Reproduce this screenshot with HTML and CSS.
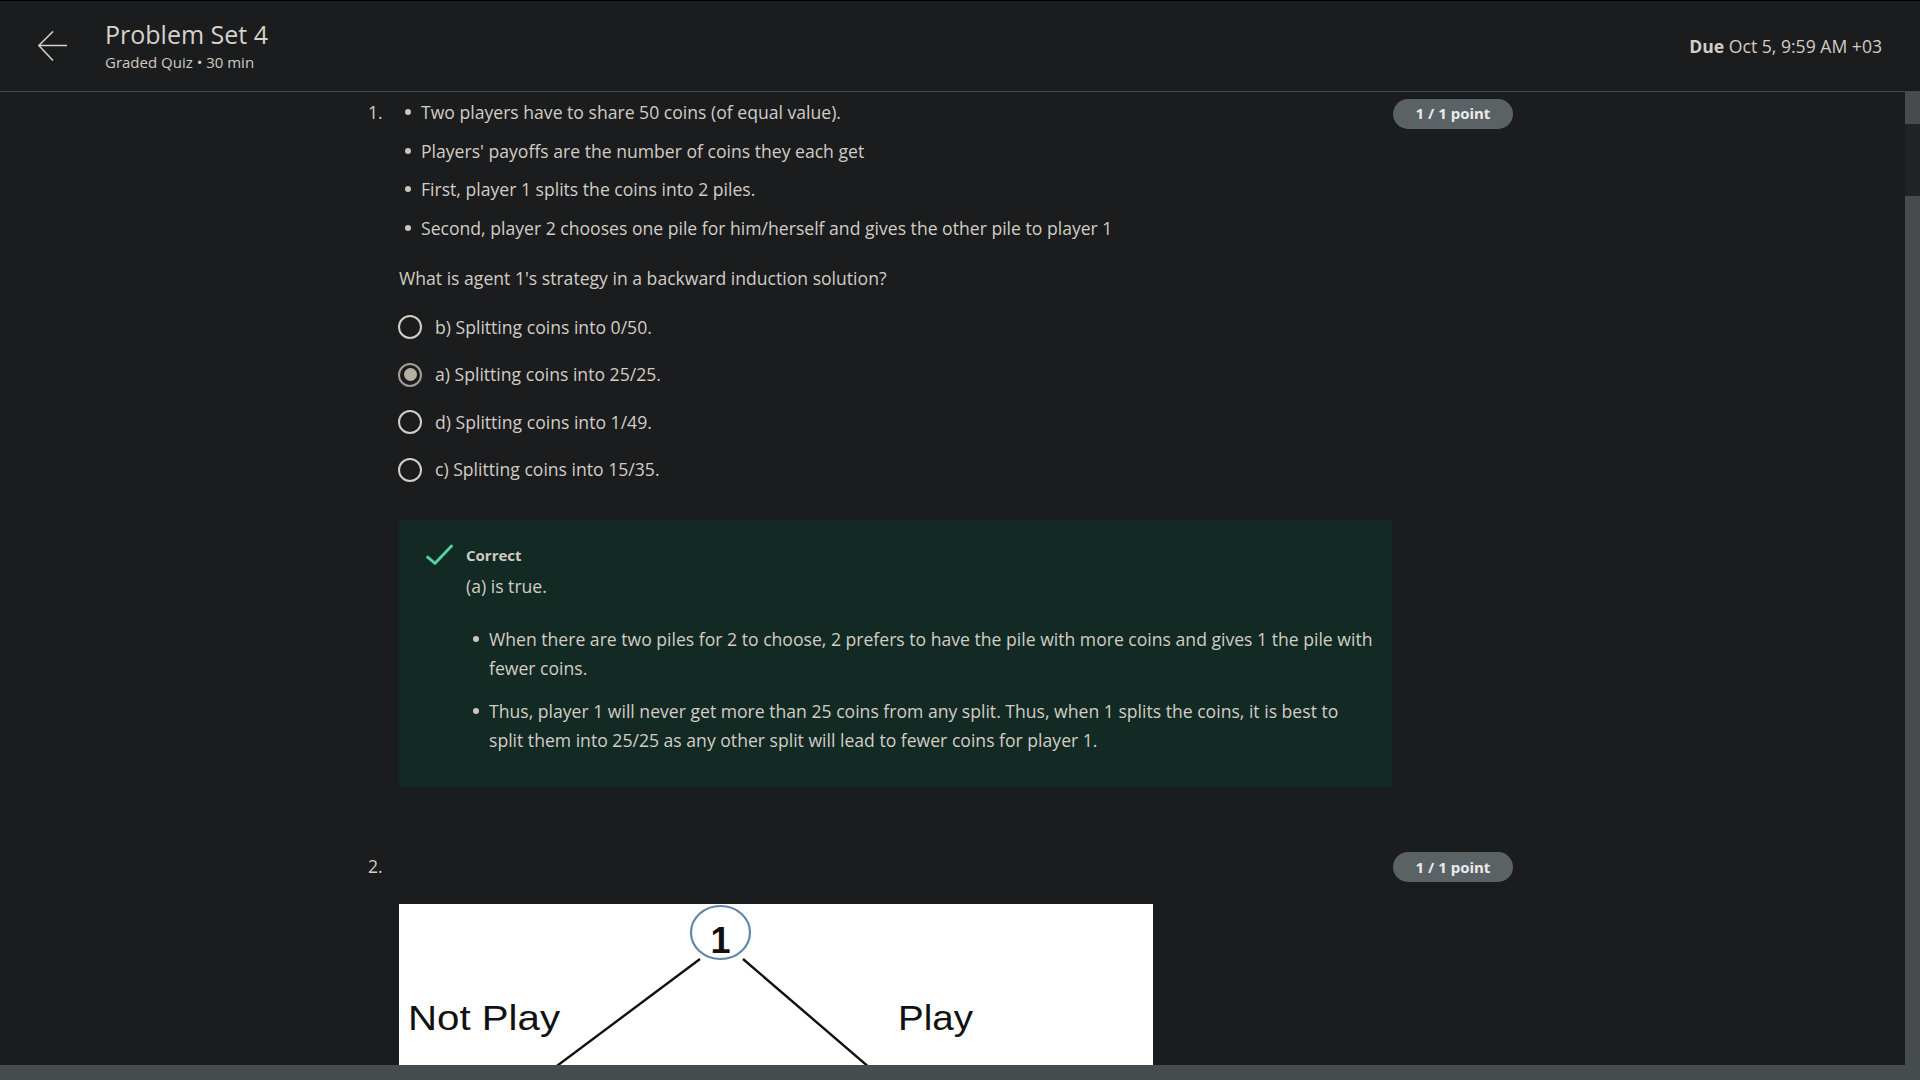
FILE: index.html
```html
<!DOCTYPE html>
<html lang="en">
<head>
<meta charset="utf-8">
<title>Problem Set 4</title>
<link rel="stylesheet" href="styles.css">
</head>
<body>
<div class="app">
  <header class="topbar">
    <div class="topbar-left">
      <svg class="back" width="30" height="31" viewBox="0 0 30 31" aria-hidden="true">
        <path d="M29 14.5 H1 M15 0.5 L0.8 14.5 L15 29.5" fill="none" stroke="#d4d0c8" stroke-width="1.6"/>
      </svg>
      <div class="titles">
        <div class="title">Problem Set 4</div>
        <div class="subtitle">Graded Quiz • 30 min</div>
      </div>
    </div>
    <div class="due"><b>Due</b> Oct 5, 9:59 AM +03</div>
  </header>
  <div class="viewport">
    <main class="content">
      <div class="quiz">
        <section class="question q1">
          <div class="qnum">1.</div>
          <div class="qbody">
            <ul class="facts">
              <li>Two players have to share 50 coins (of equal value).</li>
              <li>Players' payoffs are the number of coins they each get</li>
              <li>First, player 1 splits the coins into 2 piles.</li>
              <li>Second, player 2 chooses one pile for him/herself and gives the other pile to player 1</li>
            </ul>
            <p class="prompt">What is agent 1's strategy in a backward induction solution?</p>
            <div class="options">
              <label class="option"><span class="radio"></span><span>b) Splitting coins into 0/50.</span></label>
              <label class="option"><span class="radio checked"></span><span>a) Splitting coins into 25/25.</span></label>
              <label class="option"><span class="radio"></span><span>d) Splitting coins into 1/49.</span></label>
              <label class="option"><span class="radio"></span><span>c) Splitting coins into 15/35.</span></label>
            </div>
            <div class="feedback">
              <svg class="check" width="28" height="22" viewBox="0 0 28 22" aria-hidden="true">
                <path d="M1.7 12.4 L10 19.3 L27.3 1.2" fill="none" stroke="#55d3a0" stroke-width="2.8"/>
              </svg>
              <div class="fb-text">
                <div class="fb-title">Correct</div>
                <p class="fb-lead">(a) is true.</p>
                <ul class="fb-list">
                  <li>When there are two piles for 2 to choose, 2 prefers to have the pile with more coins and gives 1 the pile with fewer coins.</li>
                  <li>Thus, player 1 will never get more than 25 coins from any split. Thus, when 1 splits the coins, it is best to split them into 25/25 as any other split will lead to fewer coins for player 1.</li>
                </ul>
              </div>
            </div>
          </div>
          <div class="qscore"><span class="badge">1 / 1 point</span></div>
        </section>
        <section class="question q2">
          <div class="qnum">2.</div>
          <div class="qbody">
            <p class="empty"></p>
            <svg class="tree" width="754" height="300" viewBox="0 0 754 300" aria-label="Game tree">
              <rect x="0" y="0" width="754" height="300" fill="#ffffff"/>
              <line x1="301" y1="55" x2="24" y2="262" stroke="#111" stroke-width="2.4"/>
              <line x1="344" y1="55" x2="585" y2="262" stroke="#111" stroke-width="2.4"/>
              <ellipse cx="321.5" cy="28.5" rx="29.5" ry="26.5" fill="#ffffff" stroke="#6385a8" stroke-width="2.2"/>
              <text x="321.5" y="49" text-anchor="middle" class="node-label">1</text>
              <text x="9" y="126" class="edge-label" textLength="152" lengthAdjust="spacingAndGlyphs">Not Play</text>
              <text x="499" y="126" class="edge-label" textLength="75" lengthAdjust="spacingAndGlyphs">Play</text>
            </svg>
          </div>
          <div class="qscore"><span class="badge">1 / 1 point</span></div>
        </section>
      </div>
    </main>
    <div class="vscroll"><div class="vthumb"></div></div>
  </div>
  <div class="hscroll"></div>
</div>
</body>
</html>
```
FILE: styles.css
```css
* { box-sizing: border-box; }
html, body {
  margin: 0;
  padding: 0;
  height: 100%;
  overflow: hidden;
  background: #1b1c1e;
}
body {
  font-family: "Open Sans", "Noto Sans", sans-serif;
  color: #d2cdc5;
}
.app {
  display: flex;
  flex-direction: column;
  height: 100vh;
}
.topbar {
  height: 92px;
  flex: none;
  display: flex;
  align-items: center;
  justify-content: space-between;
  border-top: 1px solid #000;
  border-bottom: 1px solid #44474a;
  padding: 0 38px 0 38px;
  background: #1b1c1e;
}
.topbar-left {
  display: flex;
  align-items: center;
  gap: 37px;
}
.back { display: block; margin-top: 1px; }
.titles {
  display: flex;
  flex-direction: column;
  gap: 2px;
  margin-bottom: 3px;
}
.title {
  font-size: 25px;
  line-height: 32px;
  color: #d6d2ca;
}
.subtitle {
  font-size: 15px;
  line-height: 20px;
  color: #cfcac2;
}
.due {
  font-size: 17.6px;
  line-height: 28px;
  color: #d2cdc5;
}
.due b { font-weight: 700; }
.viewport {
  flex: 1;
  display: flex;
  min-height: 0;
}
.content {
  flex: 1;
  overflow: hidden;
}
.vscroll {
  width: 15px;
  flex: none;
  background: #464b4e;
  padding-top: 32px;
}
.vthumb {
  height: 72px;
  background: #1f2324;
}
.hscroll {
  height: 15px;
  flex: none;
  background: #464b4e;
}
.quiz {
  margin-left: 367px;
  width: 1146px;
  padding-top: 6px;
}
.question {
  display: grid;
  grid-template-columns: 32px 994px 120px;
  align-items: start;
  font-size: 17.6px;
  line-height: 29px;
}
.q1 { margin-bottom: 65px; }
.qnum { padding-left: 1px; }
.qscore {
  display: flex;
  padding-top: 0.5px;
}
.badge {
  display: inline-flex;
  align-items: center;
  justify-content: center;
  width: 120px;
  height: 30px;
  border-radius: 15px;
  background: #5a6265;
  color: #ebebeb;
  font-size: 15px;
  font-weight: 700;
  line-height: 1;
}
.facts, .fb-list { list-style: none; }
.facts li::before, .fb-list li::before {
  content: "";
  display: inline-block;
  width: 6px;
  height: 6px;
  border-radius: 50%;
  background: #cbc6be;
  margin-left: -16px;
  margin-right: 10px;
  vertical-align: 4px;
}
.facts {
  margin: 0 0 21px;
  padding-left: 22px;
}
.facts li { margin-bottom: 9.5px; }
.prompt { margin: 0 0 20px; }
.options {
  display: flex;
  flex-direction: column;
  gap: 18.5px;
  margin-bottom: 36px;
}
.option {
  display: flex;
  align-items: center;
  gap: 13px;
  height: 29px;
}
.radio {
  width: 24px;
  height: 24px;
  flex: none;
  border-radius: 50%;
  border: 2px solid #d3cfc7;
  display: flex;
  align-items: center;
  justify-content: center;
  margin-left: -1px;
}
.radio.checked { border-color: #a29e96; }
.radio.checked::after {
  content: "";
  width: 13px;
  height: 13px;
  border-radius: 50%;
  background: #b6afa3;
}
.feedback {
  display: flex;
  align-items: flex-start;
  gap: 13px;
  background: #132a24;
  padding: 24px 17px 32px 26px;
  width: 993px;
}
.check { display: block; flex: none; }
.fb-text { flex: 1; }
.fb-title {
  font-size: 15px;
  line-height: 22px;
  font-weight: 700;
  color: #cfcac2;
}
.fb-lead { margin: 6px 0 0; }
.fb-list {
  margin: 23.5px 0 0;
  padding-left: 23px;
}
.fb-list li { margin-bottom: 14px; }
.fb-list li:last-child { margin-bottom: 0; }
.empty { margin: 0; height: 29px; }
.tree { display: block; margin-top: 23px; }
.node-label {
  font-family: "Liberation Sans", Arial, sans-serif;
  font-size: 36px;
  font-weight: 700;
  fill: #111;
}
.edge-label {
  font-family: "Liberation Sans", Arial, sans-serif;
  font-size: 35px;
  fill: #111;
}
```
